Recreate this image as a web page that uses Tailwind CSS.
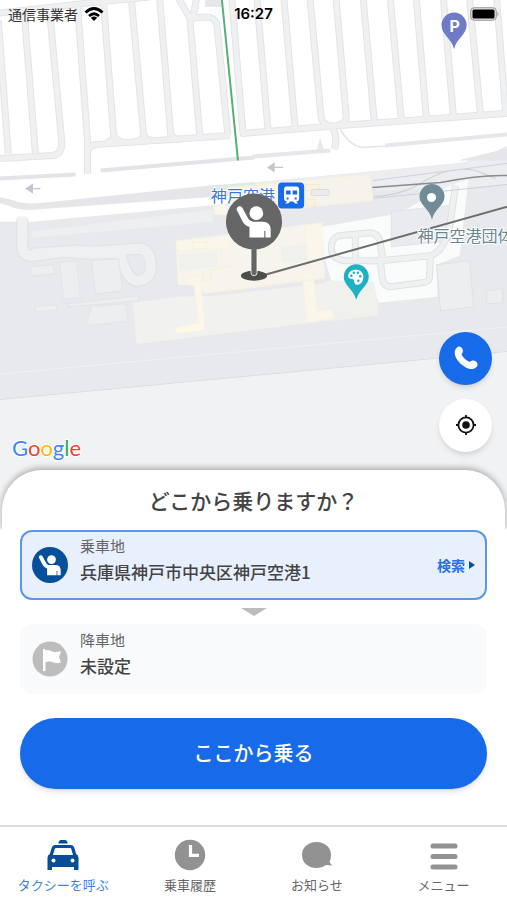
<!DOCTYPE html>
<html lang="ja">
<head>
  <meta charset="UTF-8" />
  <meta name="viewport" content="width=device-width, initial-scale=1.0" />
  <title>タクシーを呼ぶ</title>
  <script src="https://cdn.jsdelivr.net/npm/@tailwindcss/browser@4"></script>
</head>
<body class="bg-white text-[#444] min-h-screen flex flex-col font-['Noto_Sans_CJK_JP',sans-serif]">

  <!-- Shared icon -->
  <svg class="hidden">
    <symbol id="rider" viewBox="0 0 36 36">
      <circle cx="19.500" cy="12.600" r="4.400" />
      <path d="M7.800 8.500c1-.6 2.300-.2 2.900.9l3.200 6c.9 1.800 2 2.600 3.800 2.600h5.800c3.300 0 5.200 1.900 5.200 5.100v5.100h-3.400v-4.200h-.7v4.200h-9.500v-6.800c-2.300-.6-3.900-2.100-4.900-4.400L7.100 10.900c-.4-.9-.2-1.900.7-2.400z" />
    </symbol>
  </svg>

  <!-- Map -->
  <section class="relative flex-1 flex flex-col bg-[#f0f2f4]">
    <svg class="absolute inset-0 w-full h-full" viewBox="0 0 507 528" preserveAspectRatio="xMidYMid slice" aria-label="地図">
      <rect width="507" height="528" fill="#f0f2f4" />
      <path d="M0 0H507V350L0 398z" fill="#e7e9ed" />
      <path d="M0 398.500L507 350.500" stroke="#dadce1" fill="none" />
      <path d="M0 373L507 326" stroke="#f0f1f3" fill="none" />
      <path d="M0 0H507V145Q480 161 453 163L253 182V201L33 221H0z" fill="#fff" />
      <path d="M450 164Q485 160 507 148V185L380 190L253 197V182z" fill="#ebedf0" />

      <!-- Parking lanes: outline first, then fill -->
      <defs>
        <g id="lanes" fill="none" stroke-linejoin="round">
          <path d="M0 13L107 1L150-3M-1 20L9 153M25 14L36 153M50 10L62 138Q64 153 54 155L0 158M78 5L88 140V173M104 3L114 135Q114 141 106 142M132 2L144 135Q142 141 134 141M160 0L171 135M178-3L190 18L200 136M197-3L193 18L207 17Q215 17 217 25L228 135M88 153Q88 145 97 144L230 135M232 0L243 133L330 126L507 113M257 0L268 130M284 0L295 128M310 0L321 118Q323 125 332 126M336 0L346 118Q344 125 334 126M363 0L374 122M390 0L401 121M416 0L426 120M443 0L453 118M469 0L480 116M496 0L505 113" />
          <path d="M114 135Q116 140 124 142M144 135Q146 140 154 140M171 134Q174 139 180 139M332 126Q338 138 334 149" />
        </g>
        <path id="loops" d="M338 235L370 232Q379 233 380 243L382 256Q380 261 370 260L344 260Q331 258 331 247Q331 238 338 235zM355 234V260M380 260L430 255Q443 251 449 227L455 185M430 255L429 277Q428 282 421 282L390 286Q383 285 382 278L380 260" fill="none" />
      </defs>
      <use href="#lanes" stroke="#e3e4e7" stroke-width="7" />
      <use href="#lanes" stroke="#eff0f2" stroke-width="5" />
      <path d="M205 0h18v7h-18z" fill="#e5e7ea" />
      <path d="M320 137l4 14h-8zM348 137l2 5" fill="#e8e9eb" />
      <path d="M340 129Q349 145 362 147L392 145" stroke="#e3e5e8" stroke-width="1.500" fill="none" />
      <path d="M253 156L330 150M385 145L507 134" stroke="#e5e7ea" stroke-width="4" fill="none" />
      <path d="M457 160L507 148V160z" fill="#e4e6ea" />

      <!-- Main road -->
      <path d="M0 178L76 174M101 170L254 157" stroke="#e2e4e8" stroke-width="4" fill="none" />
      <path d="M0 197Q12 199 20 202Q27 204 40 203L213 185L253 182V193L213 196L30 209Q18 209 10 205L0 202z" fill="#e4e6ea" stroke="#dcdee2" stroke-width=".5" />
      <path d="M26 188h15M27 188l6-4v8zM268 167h15M268 167l6-4v8z" fill="#c3c5cf" stroke="#c3c5cf" stroke-width="1.200" />

      <!-- Terminal grounds -->
      <path d="M32 231L213 209V221L32 237z" fill="#edeff1" />
      <path d="M23 218V247Q24 256 34 255L64 251L90 253L120 252Q127 280 138 280Q152 279 151 263Q150 247 138 248L96 251L76 250L33 253" fill="none" stroke="#dfe2e5" stroke-width="12" />
      <path d="M23 216V247Q24 256 34 255L64 251L90 253L120 252Q127 280 138 280Q152 279 151 263Q150 247 138 248L96 251L76 250L33 253" fill="none" stroke="#eef0f2" stroke-width="10" />
      <path d="M60 262L77 260L81 297L64 298zM92 260L119 258L123 290L96 293zM31 266L54 264L55 273L32 275zM36 306L57 304V309L36 311zM68 303L139 295V300L70 306zM92 306L126 303L128 320L86 325z" fill="#eceef0" stroke="#e2e4e8" />
      <path d="M133 302L178 296L213 295L375 277V314L137 343z" fill="#f1f1ef" />
      <path d="M176 240L320 222L325 278L205 293L199 285L178 284z" fill="#f6f4ed" />
      <path d="M176 240L229 235V247L178 251zM185 277L200 275L205 320L199 324L194 284L186 283zM305 225L322 222L325 257L306 260zM302 273L313 272L317 310L337 308V317L307 321zM213 205H228V214H215z" fill="#faf7ea" stroke="#f8f1de" stroke-width=".8" />
      <path d="M176 327L204 321V329L176 332z" fill="#fdf9e6" />
      <path d="M205 293L325 277M205 270L234 265M221 250L222 267L235 264M193 241h14v7h-14zM203 272l8-1v8l-8 1z" fill="none" stroke="#f8efd6" />
      <path d="M178 254L217 250L218 266L180 270zM281 246L306 242L308 260L281 262zM325 281L375 275L378 314L334 320z" fill="#f0f0ed" />
      <path d="M229 187L369 174L373 200L231 214z" fill="#f5f3eb" stroke="#f8f1dd" />
      <path d="M305 184h14v6h-14zM306 199h9v6h-9z" fill="#f9f2de" stroke="#f5ebcd" />
      <rect x="311" y="189" width="18" height="6" rx="2" fill="#ececec" stroke="#ddd" />

      <!-- Car park on the right -->
      <path d="M322 226L398 213L445 187L468 178L459 255L436 264L437 296L378 302L373 280L331 280L325 259z" fill="#fafbfb" />
      <path d="M391 211L450 205V240L391 246z" fill="#e9ebee" stroke="#e0e2e6" />
      <use href="#loops" stroke="#dfe1e4" stroke-width="7" />
      <use href="#loops" stroke="#eff0f2" stroke-width="5" />
      <path d="M436 264L469 260L473 306L440 310zM486 290L502 288V302L486 303z" fill="#eceef0" stroke="#dfe1e5" />

      <!-- Rail lines -->
      <path d="M222 0L238 160" stroke="#56b176" stroke-width="2" fill="none" />
      <path d="M373 196Q402 195 425 180Q450 165 475 170L495 178M373 180L507 163M373 198L507 184" stroke="#cfd1d3" fill="none" />
      <path d="M372 187L440 182Q480 174 507 175" stroke="#8b8b8b" stroke-width="1.500" fill="none" />
      <path d="M258 276L507 206" stroke="#6d6d6d" stroke-width="2" fill="none" />

      <!-- Labels and pins -->
      <g stroke="#fff" stroke-width="2" paint-order="stroke" stroke-linejoin="round" font-size="16">
        <text x="211" y="201" fill="#3c78dc">神戸空港</text>
        <text x="417" y="241" fill="#6c868f">神戸空港団体</text>
      </g>
      <rect x="278" y="182" width="26" height="26" rx="4" fill="#176be8" />
      <path d="M287 186h9q3 0 3 3v9q0 3-3 3l2 2h-3l-2-2h-3l-2 2h-3l2-2q-3 0-3-3v-9q0-3 2-3z" fill="#fff" />
      <path d="M286 190h4.500v4H286zM292.500 190h4.500v4h-4.500zM286.500 197h2v2h-2zM294.500 197h2v2h-2z" fill="#176be8" />

      <path d="M453.500 49C451 38 441 35 441 25A12.500 12.500 0 0 1 466 25C466 35 456 38 453.500 49z" fill="#6f7bc7" />
      <text x="454" y="32" text-anchor="middle" font-size="16" font-weight="700" fill="#fff" font-family="Roboto, sans-serif">P</text>
      <path d="M431.500 219C429 208 419 205 419 196A12.500 12.500 0 0 1 444 196C444 205 434 208 431.500 219z" fill="#708c96" />
      <circle cx="431" cy="197" r="4.500" fill="#fff" />
      <path d="M356 299C353 288 343.500 285 343.500 276A12.500 12.500 0 0 1 368.500 276C368.500 285 359 288 356 299z" fill="#1eb1c3" />
      <path d="M348 275c0-4 4-6 8-6 4 0 7 3 7 7 0 5-3 8-6 8-2 0-3-1-3-3 0-2-1-3-3-3s-3-1-3-3z" fill="#fff" />
      <path d="M351 275h.1M353.500 272h.1M357.500 272h.1M360 275.500h.1M358 280h.1" stroke="#1eb1c3" stroke-width="2.400" stroke-linecap="round" />

      <!-- Pick-up point -->
      <ellipse cx="254" cy="275" rx="13" ry="5" fill="#4d4d4a" />
      <path d="M251 248h6v24q0 3-3 3t-3-3z" fill="#666" stroke="#fff" stroke-width=".8" />
      <circle cx="254" cy="221" r="28" fill="#666" />
      <use href="#rider" x="226" y="193" width="56" height="56" fill="#fff" />
    </svg>

    <!-- Status bar -->
    <header class="relative grid grid-cols-3 items-center h-7 pl-2 pr-2 text-black">
      <div class="flex items-center gap-1.5 text-sm text-[#333]">
        通信事業者
        <svg class="w-5 h-4" viewBox="0 0 20 16" fill="none" stroke="#000" stroke-width="2.800">
          <path d="M1.500 6.500Q10-1.500 18.500 6.500M5 10Q10 5.500 15 10" />
          <path d="M10 15L6.800 11.800Q10 9 13.200 11.800z" fill="#000" stroke="none" />
        </svg>
      </div>
      <time class="text-center text-[15px] font-semibold font-[Inter,sans-serif]">16:27</time>
      <svg class="justify-self-end w-[29px] h-3.5" viewBox="0 0 29 14">
        <rect x=".7" y=".7" width="25.600" height="12.600" rx="3.500" fill="#ddd" stroke="#999" />
        <rect x="2.500" y="2.500" width="22" height="9" rx="1.500" />
        <path d="M27.500 4.500q2 2.500 0 5z" fill="#999" />
      </svg>
    </header>

    <div class="relative mt-auto flex justify-between items-end pl-3 pr-[15px] pb-[78px]">
      <a href="#" aria-label="Google" class="text-[22px] leading-6 -mb-2 font-[Lato,sans-serif] [-webkit-text-stroke:2px_white] [paint-order:stroke_fill]"><span class="text-[#4285f4]">G</span><span class="text-[#ea4335]">o</span><span class="text-[#fbbc05]">o</span><span class="text-[#4285f4]">g</span><span class="text-[#34a853]">l</span><span class="text-[#ea4335]">e</span></a>
      <div class="flex flex-col gap-3.5">
        <button aria-label="電話" class="size-[53px] rounded-full bg-[#176be8] shadow-md flex items-center justify-center">
          <svg class="size-7" viewBox="0 0 28 28"><path d="M5 3.500C7 1.500 9.500 2.500 10.500 5C11.500 7.500 10.500 9 9.500 10.500C11 13.500 14 16.500 17.500 18C19 17 20.500 16 23 17C25.500 18 26.500 20.500 24.500 23C22 25.500 18 26 13 23C7.500 19.500 3.500 14.500 2.800 10C2.400 7 3.300 5 5 3.500z" fill="#fff" /></svg>
        </button>
        <button aria-label="現在地" class="size-[53px] rounded-full bg-white shadow-md flex items-center justify-center">
          <svg class="size-5" viewBox="0 0 20 20" fill="none" stroke="#111" stroke-width="1.800"><circle cx="10" cy="10" r="7.600" /><circle cx="10" cy="10" r="3.800" fill="#111" stroke="none" /><path d="M10 0v3M10 17v3M0 10h3M17 10h3" /></svg>
        </button>
      </div>
    </div>
  </section>

  <!-- Booking sheet -->
  <main class="relative -mt-[60px] mx-0.5 px-[18px] pt-3.5 pb-9 bg-white rounded-t-[40px]">
    <div class="absolute inset-x-0 top-0 h-[60px] rounded-t-[40px] shadow-[0_-2px_6px_rgba(0,0,0,0.3)] [clip-path:inset(-12px_-2px_1px_-2px)] bg-white"></div>
    <h1 class="relative text-center text-[21px] leading-8 font-medium">どこから乗りますか？</h1>

    <button class="relative w-full mt-3.5 h-[70px] px-2.5 flex items-center text-left rounded-xl border-2 border-[#5c97ee] bg-[#e8effd]">
      <svg class="size-9 rounded-full bg-[#064f9b] fill-white"><use href="#rider" /></svg>
      <span class="flex-1 ml-3 pb-2.5 flex flex-col">
        <span class="text-[15px] leading-6 text-[#666]">乗車地</span>
        <span class="text-[17px] leading-7 font-medium">兵庫県神戸市中央区神戸空港1</span>
      </span>
      <span class="flex items-center gap-1 text-sm font-bold text-[#2672e8]">
        検索
        <svg class="w-1.5 h-2" viewBox="0 0 6 8"><path d="M0 0L6 4L0 8z" fill="#0a4f9f" /></svg>
      </span>
    </button>

    <svg class="block mx-auto my-2 w-[26px] h-2" viewBox="0 0 26 9" preserveAspectRatio="none"><path d="M0 0H26L13 9z" fill="#bdbdbd" /></svg>

    <button class="w-full h-[70px] px-3 flex items-center text-left rounded-xl bg-[#f8fafc]">
      <svg class="size-9" viewBox="0 0 36 36"><circle cx="18" cy="18" r="17.500" fill="#bdbdbd" /><path d="M11 8h2v1.500c4-1.500 6 1.500 9 1.500 2.500 0 4-.5 7-.5l-2 5.500 2 5.500c-5 1.500-7 0-9.500-.7-2.500-.8-4.500-.3-6 .2V30H11z" fill="#fff" /></svg>
      <span class="flex-1 ml-3 pb-2.5 flex flex-col">
        <span class="text-[15px] leading-6 text-[#666]">降車地</span>
        <span class="text-[17px] leading-7 font-medium">未設定</span>
      </span>
    </button>

    <button class="w-full mt-6 h-[71px] rounded-full bg-[#176be8] text-white text-xl font-medium shadow-md">ここから乗る</button>
  </main>

  <!-- Tab bar -->
  <nav class="grid grid-cols-4 border-t-2 border-[#dcdcdc] pt-3 pb-1.5 text-[13px] text-[#666]">
    <a href="#" aria-current="page" class="flex flex-col items-center gap-1 text-[#3c83e8]">
      <svg class="size-8" viewBox="0 0 32 32"><path d="M11.500 4.500Q11.500 1 14 1h4q2.500 0 2.500 3.500zM8 6h16q2.500 0 3.200 2.500l2 6.500q2.300 1 2.300 4v12h-4.500v-3H5v3H.5V19q0-3 2.300-4l2-6.500Q5.500 6 8 6z" fill="#064f96" /><path d="M9 9h14q1 0 1.300 1l1.700 6H6l1.700-6q.3-1 1.300-1z" fill="#fff" /><circle cx="6.500" cy="21.500" r="2" fill="#fff" /><circle cx="25.500" cy="21.500" r="2" fill="#fff" /></svg>
      タクシーを呼ぶ
    </a>
    <a href="#" class="flex flex-col items-center gap-1">
      <svg class="size-8" viewBox="0 0 32 32"><circle cx="16" cy="16" r="15.200" fill="#929292" /><path d="M16.500 6v10.300H25" fill="none" stroke="#fff" stroke-width="3.200" /></svg>
      乗車履歴
    </a>
    <a href="#" class="flex flex-col items-center gap-1">
      <svg class="size-8" viewBox="0 0 32 32"><path d="M15.500 3C24 3 30 8.500 30 16q0 4-1.500 6.500 1 3 3 4l-6.500-.5Q21 29 15.500 29C7 29 1 23.500 1 16S7 3 15.500 3z" fill="#929292" /></svg>
      お知らせ
    </a>
    <a href="#" class="flex flex-col items-center gap-1">
      <svg class="size-8" viewBox="0 0 32 32"><path d="M5 7h22M5 17.500h22M5 28h22" stroke="#929292" stroke-width="5" stroke-linecap="round" /></svg>
      メニュー
    </a>
  </nav>
</body>
</html>
